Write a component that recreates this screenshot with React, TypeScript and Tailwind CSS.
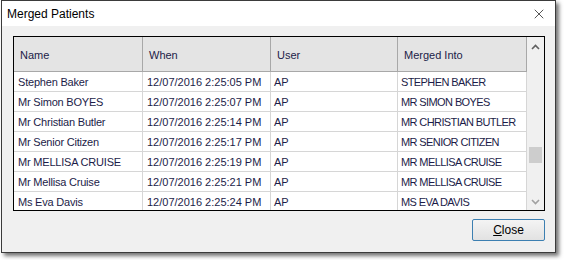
import { X } from 'lucide-react'

const rows = [
    { name: 'Stephen Baker', when: '12/07/2016 2:25:05 PM', user: 'AP', into: 'STEPHEN BAKER' },
    { name: 'Mr Simon BOYES', when: '12/07/2016 2:25:07 PM', user: 'AP', into: 'MR SIMON BOYES' },
    { name: 'Mr Christian Butler', when: '12/07/2016 2:25:14 PM', user: 'AP', into: 'MR CHRISTIAN BUTLER' },
    { name: 'Mr Senior Citizen', when: '12/07/2016 2:25:17 PM', user: 'AP', into: 'MR SENIOR CITIZEN' },
    { name: 'Mr MELLISA CRUISE', when: '12/07/2016 2:25:19 PM', user: 'AP', into: 'MR MELLISA CRUISE' },
    { name: 'Mr Mellisa Cruise', when: '12/07/2016 2:25:21 PM', user: 'AP', into: 'MR MELLISA CRUISE' },
    { name: 'Ms Eva Davis', when: '12/07/2016 2:25:24 PM', user: 'AP', into: 'MS EVA DAVIS' },
]

const cols = ['w-[129px]', 'w-[128px]', 'w-[127px]', 'w-[129px]']

const App = () => {
    return (
        <div className="w-[564px] h-[260px] bg-white pl-px font-['Liberation_Sans',sans-serif]">
            <div className="w-[555px] h-[253px] border border-[#3b3b3b] flex flex-col shadow-[3px_3px_4px_rgba(0,0,0,0.55)]">
                <div className="h-[25px] bg-white flex items-center justify-between pl-[5px] pr-[8px]">
                    <span className="text-[12px] text-black">Merged Patients</span>
                    <X size={16} strokeWidth={1} className="text-black" />
                </div>
                <div className="flex-1 bg-[#f0f0f0] pt-[10px] pl-[11px] flex flex-col">
                    <div className="w-[532px] h-[175px] border border-black bg-white flex overflow-hidden">
                        <div className="w-[513px] flex flex-col">
                            <div className="h-[35px] shrink-0 flex bg-[#e4e4e4] border-b border-[#a8a8a8]">
                                {['Name', 'When', 'User', 'Merged Into'].map((h, i) => (
                                    <div
                                        key={h}
                                        className={`${cols[i]} border-r border-[#a8a8a8] flex items-center pl-[6px] pt-[2px] text-[11px] text-[#1c1c48]`}
                                    >
                                        {h}
                                    </div>
                                ))}
                            </div>
                            {rows.map((r, idx) => (
                                <div key={idx} className="h-[20px] shrink-0 flex border-b border-[#d6d6d6] text-[11px] text-[#1c1c48]">
                                    <div className="w-[129px] border-r border-[#d6d6d6] flex items-center pl-[4px] pt-[2px] tracking-[-0.2px]">{r.name}</div>
                                    <div className="w-[128px] border-r border-[#d6d6d6] flex items-center pl-[4px] pt-[2px]">{r.when}</div>
                                    <div className="w-[127px] border-r border-[#d6d6d6] flex items-center pl-[3px] pt-[2px]">{r.user}</div>
                                    <div className="w-[129px] border-r border-[#d6d6d6] flex items-center pl-[3px] pt-[2px] tracking-[-0.6px] whitespace-nowrap">{r.into}</div>
                                </div>
                            ))}
                        </div>
                        <div className="w-[17px] bg-[#f0f0f0] flex flex-col items-center justify-between py-[3px]">
                            <svg width="9" height="6" viewBox="0 0 9 6" className="mt-[4px]">
                                <path d="M1 5 L4.5 1.5 L8 5" stroke="#606060" strokeWidth="1.6" fill="none" />
                            </svg>
                            <div className="w-[13px] h-[16px] bg-[#cdcdcd] mt-[97px]" />
                            <svg width="9" height="6" viewBox="0 0 9 6" className="mt-auto mb-[2px]">
                                <path d="M1 1 L4.5 4.5 L8 1" stroke="#a0a0a0" strokeWidth="1.6" fill="none" />
                            </svg>
                        </div>
                    </div>
                    <div className="w-[532px] flex justify-end mt-[8px]">
                        <button className="w-[73px] h-[22px] border border-[#3c7fb1] rounded-[2px] bg-gradient-to-b from-[#f4f4f4] to-[#e2e2e2] text-[12px] text-black">
                            <span className="underline">C</span>lose
                        </button>
                    </div>
                </div>
            </div>
        </div>
    )
}

export default App
